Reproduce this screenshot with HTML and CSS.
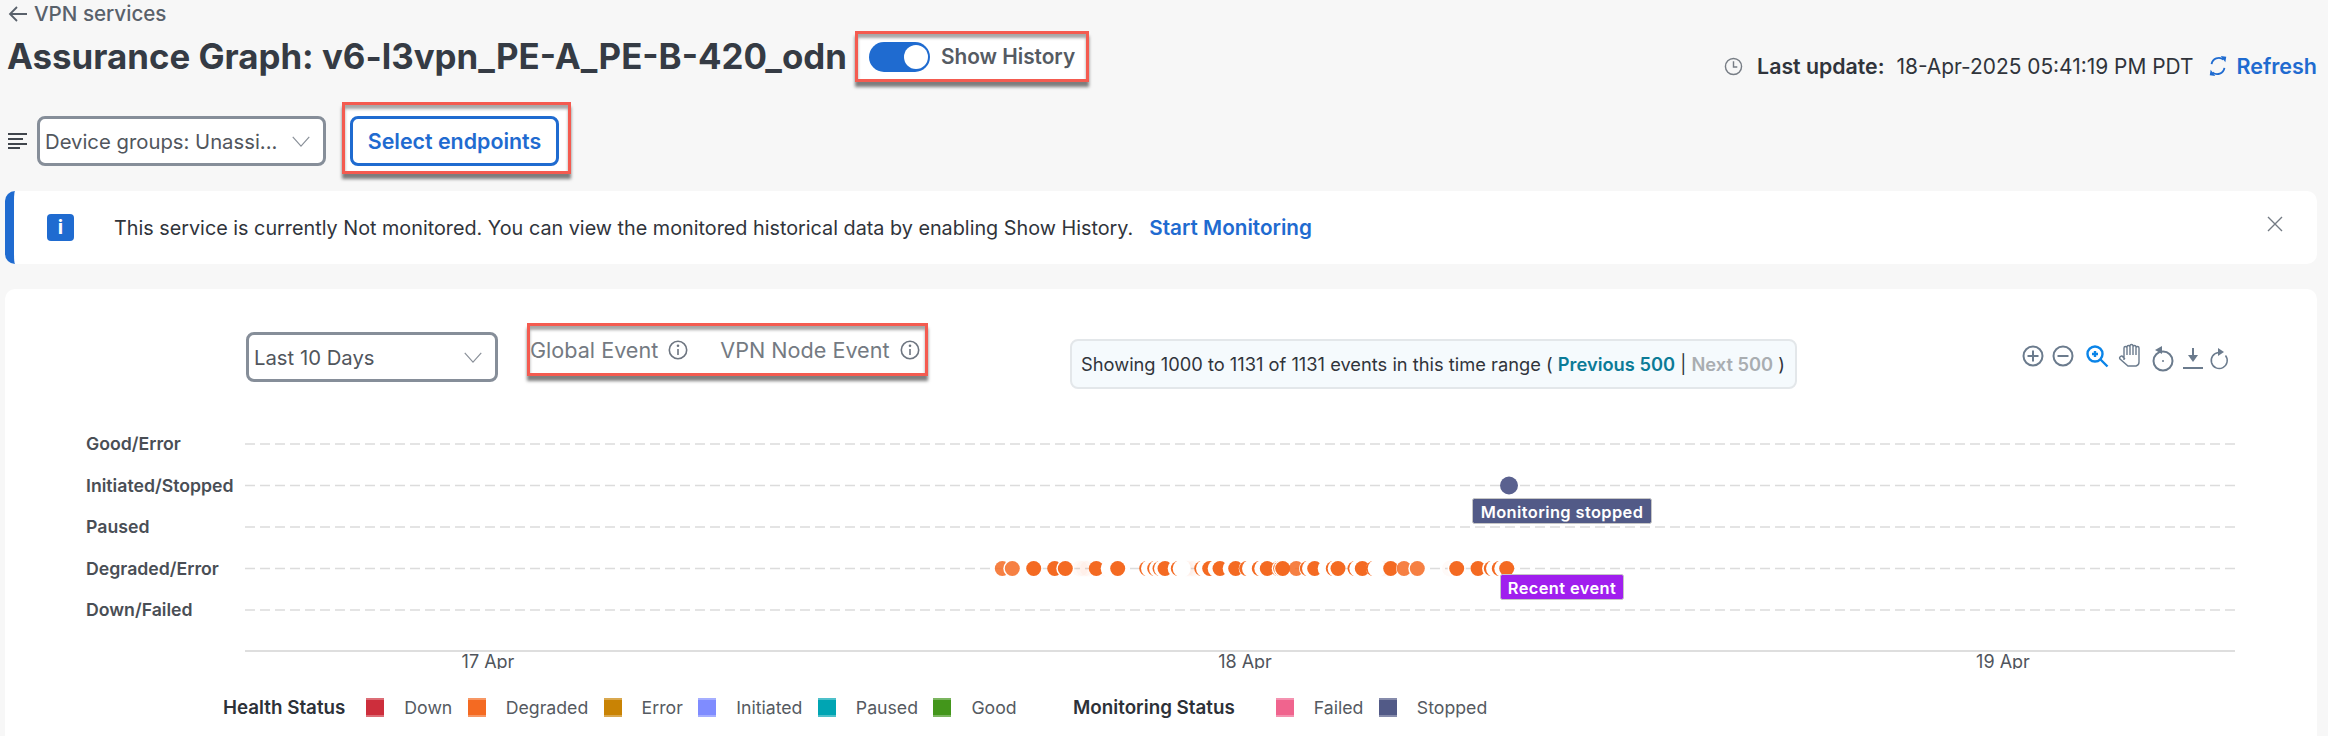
FILE: index.html
```html
<!DOCTYPE html>
<html lang="en-US">
<head>
    <meta charset="UTF-8" />
    <title>Assurance Graph</title>
    <link rel="stylesheet" href="styles.css">
</head>
<body>
    <a class="back-link" href="#">
        <svg class="back-arrow" viewBox="0 0 20 18"><path d="M19 9H2M9 2L2 9l7 7" /></svg>
        VPN services
    </a>

    <header class="title-row">
        <h1>Assurance Graph: v6-l3vpn_PE-A_PE-B-420_odn</h1>
        <div class="callout history-box">
            <span class="toggle"><span class="toggle-knob"></span></span>
            <span class="toggle-label">Show History</span>
        </div>
        <div class="last-update">
            <svg class="clock" viewBox="0 0 20 20"><circle cx="10" cy="10" r="8.5" /><path d="M10 4.5V10.5H14" /></svg>
            <b>Last update:</b>
            <span class="update-time">18-Apr-2025 05:41:19 PM PDT</span>
            <svg class="refresh" viewBox="0 0 20 24"><path d="M3 10a8 8 0 0 1 13-5M17 14a8 8 0 0 1-13 5" /><path class="fill" d="M13 1l6 1-1 6zM7 23l-6-1 1-6z" /></svg>
            <a href="#">Refresh</a>
        </div>
    </header>

    <div class="filter-row">
        <svg class="lines-icon" viewBox="0 0 19 16"><path d="M0 1h19M0 6h15M0 11h19M0 15h12" /></svg>
        <div class="select device-select">
            <span>Device groups: Unassi...</span>
            <svg class="chevron" viewBox="0 0 20 12"><path d="M1 1l9 10 9-10" /></svg>
        </div>
        <div class="callout endpoints-box">
            <button class="endpoints-btn">Select endpoints</button>
        </div>
    </div>

    <div class="banner">
        <span class="info-badge">i</span>
        <span class="banner-text">This service is currently Not monitored. You can view the monitored historical data by enabling Show History.</span>
        <a class="banner-link" href="#">Start Monitoring</a>
        <svg class="close" viewBox="0 0 16 16"><path d="M1 1l14 14M15 1L1 15" /></svg>
    </div>

    <section class="card">
        <div class="controls">
            <div class="select range-select">
                <span>Last 10 Days</span>
                <svg class="chevron" viewBox="0 0 20 12"><path d="M1 1l9 10 9-10" /></svg>
            </div>
            <div class="callout events-box">
                <span>Global Event</span>
                <svg class="info-icon" viewBox="0 0 20 20"><circle cx="10" cy="10" r="8.7" /><path d="M10 9v6" /><circle class="fill" cx="10" cy="5.8" r="1.3" /></svg>
                <span class="vpn-event">VPN Node Event</span>
                <svg class="info-icon" viewBox="0 0 20 20"><circle cx="10" cy="10" r="8.7" /><path d="M10 9v6" /><circle class="fill" cx="10" cy="5.8" r="1.3" /></svg>
            </div>
            <div class="range-note">Showing 1000 to 1131 of 1131 events in this time range ( <a class="prev" href="#">Previous 500</a> | <a class="next" href="#">Next 500</a> )</div>
            <svg class="toolbar" viewBox="2018 340 215 36">
                <g class="tool">
                    <circle cx="2033" cy="356" r="9.5" /><path d="M2027.5 356h11M2033 350.5v11" />
                    <circle cx="2063" cy="356" r="9.5" /><path d="M2057.5 356h11" />
                </g>
                <g class="tool tool-on">
                    <circle cx="2095" cy="354" r="7.5" /><path d="M2100.5 359.5l7 7M2092 354h6M2095 351v6" />
                </g>
                <g class="tool tool-thin">
                    <path d="M2124 360v-12a1.5 1.5 0 0 1 3 0v-1a1.5 1.5 0 0 1 3 0v-1a1.5 1.5 0 0 1 3 0v1a1.5 1.5 0 0 1 3 0v1a1.500 1.500 0 0 1 3 0v14a4 4 0 0 1-3 4h-8l-8-7a1.500 1.500 0 0 1 3-2l2 2M2127 347v8M2130 346v9M2133 346v9M2136 348v7" />
                </g>
                <g class="tool">
                    <circle cx="2163" cy="361" r="9.5" /><circle class="fill" cx="2163" cy="361" r="1" /><path class="fill" d="M2155 350l7-4v8z" />
                    <path d="M2193 348v9M2183 368h20" /><path class="fill" d="M2188 355h10l-5 7z" />
                </g>
                <g class="tool tool-reset">
                    <path d="M2225.500 355.500a8 8 0 1 1-7-3" /><path class="fill" d="M2218 348l6 4-6 4z" />
                </g>
            </svg>
        </div>

        <svg class="chart" viewBox="5 400 2312 269">
            <g class="axis-labels">
                <text x="86" y="450">Good/Error</text>
                <text x="86" y="492">Initiated/Stopped</text>
                <text x="86" y="533">Paused</text>
                <text x="86" y="575">Degraded/Error</text>
                <text x="86" y="616">Down/Failed</text>
            </g>
            <g class="grid">
                <path d="M245 444H2235M245 485.500H2235M245 527H2235M245 568.500H2235M245 610H2235" />
            </g>
            <path class="axis" d="M245 651H2235" />
            <g class="ticks">
                <text x="488" y="668">17 Apr</text>
                <text x="1245" y="668">18 Apr</text>
                <text x="2003" y="668">19 Apr</text>
            </g>

            <g class="faint">
                <circle cx="1080" cy="568.500" r="8" /><circle cx="1084" cy="568.500" r="8" /><circle cx="1088" cy="568.500" r="8" />
                <circle cx="1105" cy="568.500" r="8" /><circle cx="1186" cy="568.500" r="8" /><circle cx="1190" cy="568.500" r="8" />
                <circle cx="1194" cy="568.500" r="8" /><circle cx="1382" cy="568.500" r="8" /><circle cx="1386" cy="568.500" r="8" />
                <circle cx="1450" cy="568.500" r="8" />
            </g>
            <g class="series">
                <circle class="dot soft" cx="1002.300" /><circle class="cut" cx="1012.300" />
                <circle class="dot soft" cx="1012.300" />
                <circle class="cut" cx="1033.700" /><circle class="dot" cx="1033.700" />
                <circle class="dot" cx="1054.700" /><circle class="cut" cx="1065.300" />
                <circle class="dot" cx="1065.300" />
                <circle class="dot" cx="1096.300" /><circle class="cut" cx="1109.700" />
                <circle class="dot" cx="1117.700" />
                <circle class="dot" cx="1146.700" /><circle class="cut" cx="1150" />
                <circle class="dot" cx="1154.700" /><circle class="cut" cx="1158" />
                <circle class="dot" cx="1160" /><circle class="cut" cx="1163" />
                <circle class="dot" cx="1165" /><circle class="cut" cx="1176.700" />
                <circle class="dot" cx="1178.300" /><circle class="cut" cx="1181.700" />
                <circle class="dot" cx="1201.700" /><circle class="cut" cx="1205" />
                <circle class="dot" cx="1209.700" /><circle class="cut" cx="1216.700" />
                <circle class="dot" cx="1220" /><circle class="cut" cx="1231.700" />
                <circle class="dot" cx="1235.700" /><circle class="cut" cx="1247.700" />
                <circle class="dot" cx="1246.700" /><circle class="cut" cx="1251" />
                <circle class="dot" cx="1259.300" /><circle class="cut" cx="1263.300" />
                <circle class="dot" cx="1267.300" /><circle class="cut" cx="1280" />
                <circle class="dot" cx="1278" /><circle class="cut" cx="1280.700" />
                <circle class="dot" cx="1280.700" /><circle class="cut" cx="1283" />
                <circle class="dot" cx="1282.700" />
                <circle class="dot soft" cx="1296.300" /><circle class="cut" cx="1308" />
                <circle class="dot" cx="1307.300" /><circle class="cut" cx="1311" />
                <circle class="dot" cx="1314.700" /><circle class="cut" cx="1326.700" />
                <circle class="dot" cx="1333.300" /><circle class="cut" cx="1336.700" />
                <circle class="dot" cx="1338" />
                <circle class="dot" cx="1355" /><circle class="cut" cx="1358.300" />
                <circle class="dot" cx="1362.300" /><circle class="cut" cx="1375" />
                <circle class="dot" cx="1373.300" /><circle class="cut" cx="1376.700" />
                <circle class="dot" cx="1390.700" /><circle class="cut" cx="1405" />
                <circle class="dot soft" cx="1404" /><circle class="cut" cx="1417.300" />
                <circle class="dot soft" cx="1417.300" />
                <circle class="cut" cx="1456.700" /><circle class="dot" cx="1456.700" />
                <circle class="dot" cx="1478" /><circle class="cut" cx="1491" />
                <circle class="dot" cx="1491.300" /><circle class="cut" cx="1495" />
                <circle class="dot" cx="1499.300" /><circle class="cut" cx="1503.300" />
                <circle class="dot" cx="1506.700" />
            </g>

            <circle class="stop-dot" cx="1509" cy="485.500" r="9" />
            <rect class="tag tag-stopped" x="1472.500" y="498.500" width="179" height="25" rx="2" />
            <text class="tag-text" x="1562" y="518">Monitoring stopped</text>
            <rect class="tag tag-recent" x="1500.500" y="574.500" width="123" height="25" rx="2" />
            <text class="tag-text" x="1562" y="594">Recent event</text>
        </svg>

        <div class="legend">
            <b class="legend-title">Health Status</b>
            <i class="swatch down"></i><span>Down</span>
            <i class="swatch degraded"></i><span>Degraded</span>
            <i class="swatch error"></i><span>Error</span>
            <i class="swatch initiated"></i><span>Initiated</span>
            <i class="swatch paused"></i><span>Paused</span>
            <i class="swatch good"></i><span>Good</span>
            <b class="legend-title monitoring">Monitoring Status</b>
            <i class="swatch failed"></i><span>Failed</span>
            <i class="swatch stopped"></i><span>Stopped</span>
        </div>
    </section>
</body>
</html>
```

FILE: styles.css
```css
* {
    margin: 0;
    padding: 0;
    box-sizing: border-box;
}

html, body {
    height: 736px;
    overflow: hidden;
}

body {
    font-family: 'Inter', 'Liberation Sans', sans-serif;
    background-color: #f7f7f7;
    color: #30343b;
}

a {
    text-decoration: none;
}

svg {
    fill: none;
    stroke: currentColor;
    display: block;
    flex: none;
}

svg .fill {
    fill: currentColor;
    stroke: none;
}

/* Top of page */
.back-link {
    display: flex;
    align-items: center;
    gap: 6px;
    height: 26px;
    padding: 1px 0 0 8px;
    font-size: 20.6px;
    font-weight: 500;
    color: #59616b;
}

.back-arrow {
    width: 20px;
    height: 18px;
    stroke-width: 1.8;
}

.title-row {
    display: flex;
    align-items: flex-start;
    height: 61px;
    padding-top: 5px;
}

h1 {
    margin: 3px 0 0 7px;
    font-size: 34.85px;
    font-weight: 700;
    line-height: 44px;
    white-space: nowrap;
    color: #353b44;
}

/* Red annotation box */
.callout {
    display: flex;
    align-items: center;
    background: white;
    border: 3px solid #f45b50;
    box-shadow: 0 5px 3px rgba(60, 60, 60, 0.65), inset 0 4px 3px rgba(60, 60, 60, 0.45);
}

.history-box {
    width: 234px;
    height: 51px;
    margin-left: 8px;
    padding-left: 11px;
}

.toggle {
    display: block;
    width: 61px;
    height: 30px;
    padding: 3px 0 0 35px;
    background: #1f6bd0;
    border-radius: 15px;
}

.toggle-knob {
    display: block;
    width: 24px;
    height: 24px;
    background: white;
    border-radius: 50%;
}

.toggle-label {
    margin-left: 11px;
    font-size: 20.8px;
    font-weight: 600;
    color: #555b63;
}

.last-update {
    display: flex;
    align-items: center;
    height: 24px;
    margin: 23px 0 0 auto;
    padding-right: 11px;
    font-size: 20.9px;
}

.last-update b {
    margin-left: 14px;
    font-size: 21.3px;
    font-weight: 600;
}

.update-time {
    margin-left: 12px;
}

.last-update a {
    margin-left: 8px;
    font-size: 21.5px;
    font-weight: 600;
    color: #1f6bd0;
}

.clock {
    width: 19px;
    height: 19px;
    color: #777d85;
    stroke-width: 1.5;
}

.refresh {
    width: 20px;
    height: 22px;
    margin-left: 15px;
    color: #1f6bd0;
    stroke-width: 2;
}

/* Filters */
.filter-row {
    display: flex;
    align-items: flex-start;
    height: 104px;
    padding: 29px 0 0 8px;
}

.lines-icon {
    width: 19px;
    height: 16px;
    margin-top: 17px;
    stroke-width: 2;
    color: #40454c;
}

.select {
    display: flex;
    align-items: center;
    justify-content: space-between;
    height: 50px;
    padding: 0 12px 0 5px;
    background: white;
    border: 3px solid #868e99;
    border-radius: 8px;
    font-size: 20.3px;
    color: #51565d;
    white-space: nowrap;
}

.device-select {
    width: 289px;
    margin-left: 10px;
}

.chevron {
    width: 20px;
    height: 11px;
    color: #8a9099;
    stroke-width: 1.3;
}

.endpoints-box {
    width: 229px;
    height: 72px;
    margin: -14px 0 0 16px;
    padding: 6px 0 0 5px;
}

.endpoints-btn {
    width: 209px;
    height: 50px;
    background: white;
    border: 3px solid #1f6bd0;
    border-radius: 8px;
    font-family: inherit;
    font-size: 21.4px;
    font-weight: 600;
    color: #1f6bd0;
}

/* Notice */
.banner {
    display: flex;
    align-items: center;
    width: 2312px;
    height: 73px;
    margin-left: 5px;
    background: white;
    border-left: 9px solid #1f6bd0;
    border-radius: 10px;
    font-size: 19.8px;
}

.info-badge {
    width: 27px;
    height: 27px;
    margin-left: 33px;
    background: #1f6bd0;
    border-radius: 4px;
    color: white;
    font-weight: 700;
    line-height: 27px;
    text-align: center;
}

.banner-text {
    margin-left: 40px;
}

.banner-link {
    margin-left: 16px;
    font-size: 20.7px;
    font-weight: 600;
    color: #1f6bd0;
}

.close {
    width: 16px;
    height: 16px;
    margin: -8px 34px 0 auto;
    color: #747b84;
    stroke-width: 1.4;
}

/* Chart card */
.card {
    width: 2312px;
    height: 460px;
    margin: 25px 0 0 5px;
    background: white;
    border-radius: 10px;
}

.controls {
    display: flex;
    align-items: flex-start;
    height: 111px;
    padding: 34px 0 0 241px;
}

.range-select {
    width: 252px;
    margin-top: 9px;
}

.events-box {
    width: 401px;
    height: 53px;
    margin-left: 29px;
    font-size: 21.6px;
    color: #747a82;
}

.info-icon {
    width: 20px;
    height: 20px;
    margin-left: 10px;
    color: #6d7580;
    stroke-width: 1.6;
}

.vpn-event {
    margin-left: 32px;
}

.range-note {
    width: 727px;
    height: 50px;
    margin: 16px 0 0 142px;
    padding-left: 9px;
    background: #f5fafd;
    border: 2px solid #e3e7ea;
    border-radius: 8px;
    font-size: 18.3px;
    line-height: 46px;
    white-space: pre;
}

.prev {
    font-weight: 600;
    color: #0b7b97;
}

.next {
    font-weight: 600;
    color: #a9adb1;
}

.toolbar {
    width: 215px;
    height: 36px;
    margin: 17px 0 0 221px;
    overflow: visible;
}

.tool {
    color: #6b7b8d;
    stroke-width: 2;
}

.tool-on {
    color: #0a84e8;
    stroke-width: 2.4;
}

.tool-thin {
    stroke-width: 1.4;
}

.tool-reset {
    stroke-width: 1.5;
}

.chart {
    width: 2312px;
    height: 269px;
}

.axis-labels text {
    fill: #494e55;
    stroke: none;
    font-size: 17.7px;
    font-weight: 600;
}

.grid path {
    stroke: #dcdcdc;
    stroke-width: 1.5;
    stroke-dasharray: 10 5;
}

.axis {
    stroke: #dedede;
    stroke-width: 2;
}

.ticks text {
    fill: #50555c;
    stroke: none;
    font-size: 18px;
    text-anchor: middle;
}

.series circle {
    cy: 568.5px;
    stroke: none;
}

.dot {
    r: 7.5px;
    fill: #f46a22;
}

.dot.soft {
    opacity: 0.85;
}

.cut {
    r: 9px;
    fill: white;
}

.faint circle {
    fill: #f46a22;
    stroke: none;
    opacity: 0.03;
}

.stop-dot {
    fill: #5a618f;
    stroke: none;
}

.tag {
    stroke: #c6c6c6;
    stroke-width: 1;
}

.tag-stopped {
    fill: #525a87;
}

.tag-recent {
    fill: #a01fee;
}

.tag-text {
    fill: white;
    stroke: none;
    font-size: 16.4px;
    font-weight: 600;
    text-anchor: middle;
    letter-spacing: 0.4px;
}

/* Legend */
.legend {
    display: flex;
    align-items: center;
    height: 22px;
    margin-top: 27px;
    padding-left: 218px;
    font-size: 17.7px;
    color: #555a61;
}

.legend-title {
    margin-right: 21px;
    font-size: 18.8px;
    font-weight: 600;
    color: #2d3138;
}

.legend-title.monitoring {
    margin-left: 41px;
    margin-right: 41px;
}

.legend span {
    margin-right: 15.4px;
}

.swatch {
    width: 18px;
    height: 19px;
    margin-right: 20px;
    border-top: 2px solid rgba(255, 255, 255, 0.3);
    border-bottom: 2px solid rgba(255, 255, 255, 0.3);
}

.down { background-color: #cd2e3c; }
.degraded { background-color: #f46a22; }
.error { background-color: #c98304; }
.initiated { background-color: #7f8cff; }
.paused { background-color: #00a5b3; }
.good { background-color: #43961b; }
.failed { background-color: #f0648e; }
.stopped { background-color: #525a87; }
```
